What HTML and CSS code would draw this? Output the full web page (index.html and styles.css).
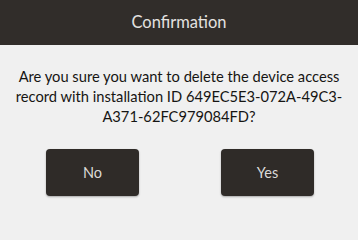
FILE: index.html
```html
<!DOCTYPE html>
<html>
<head>
<meta charset="utf-8">
<link rel="stylesheet" href="styles.css">
</head>
<body>
<div class="dialog">
  <div class="header">Confirmation</div>
  <div class="content">
    <p class="message">Are you sure you want to delete the device access record with installation ID 649EC5E3-072A-49C3-A371-62FC979084FD?</p>
    <div class="actions">
      <button class="btn">No</button>
      <button class="btn">Yes</button>
    </div>
  </div>
</div>
</body>
</html>
```
FILE: styles.css
```css
html, body {
  margin: 0;
  padding: 0;
}
body {
  width: 358px;
  height: 203px;
  overflow: hidden;
  background: #f0f0f0;
  font-family: "Lato", "Noto Sans", sans-serif;
}
.dialog {
  display: flex;
  flex-direction: column;
  height: 203px;
}
.header {
  height: 45px;
  background: #312d2a;
  color: #e4e2e0;
  font-size: 16.5px;
  display: flex;
  align-items: center;
  justify-content: center;
  padding-bottom: 1px;
  box-sizing: border-box;
}
.content {
  flex: 1;
  display: flex;
  flex-direction: column;
  align-items: center;
}
.message {
  margin: 21px 0 0 0;
  width: 340px;
  text-align: center;
  font-size: 14.7px;
  line-height: 20px;
  color: #161513;
}
.actions {
  margin-top: 23px;
  display: flex;
  gap: 82px;
  padding-left: 2px;
}
.btn {
  width: 93px;
  height: 47px;
  border: none;
  border-radius: 4px;
  background: #2f2b28;
  color: #dcdad8;
  font-family: inherit;
  font-size: 14.5px;
  box-shadow: 0 1px 2px rgba(0,0,0,0.3);
  padding: 0;
}
```
